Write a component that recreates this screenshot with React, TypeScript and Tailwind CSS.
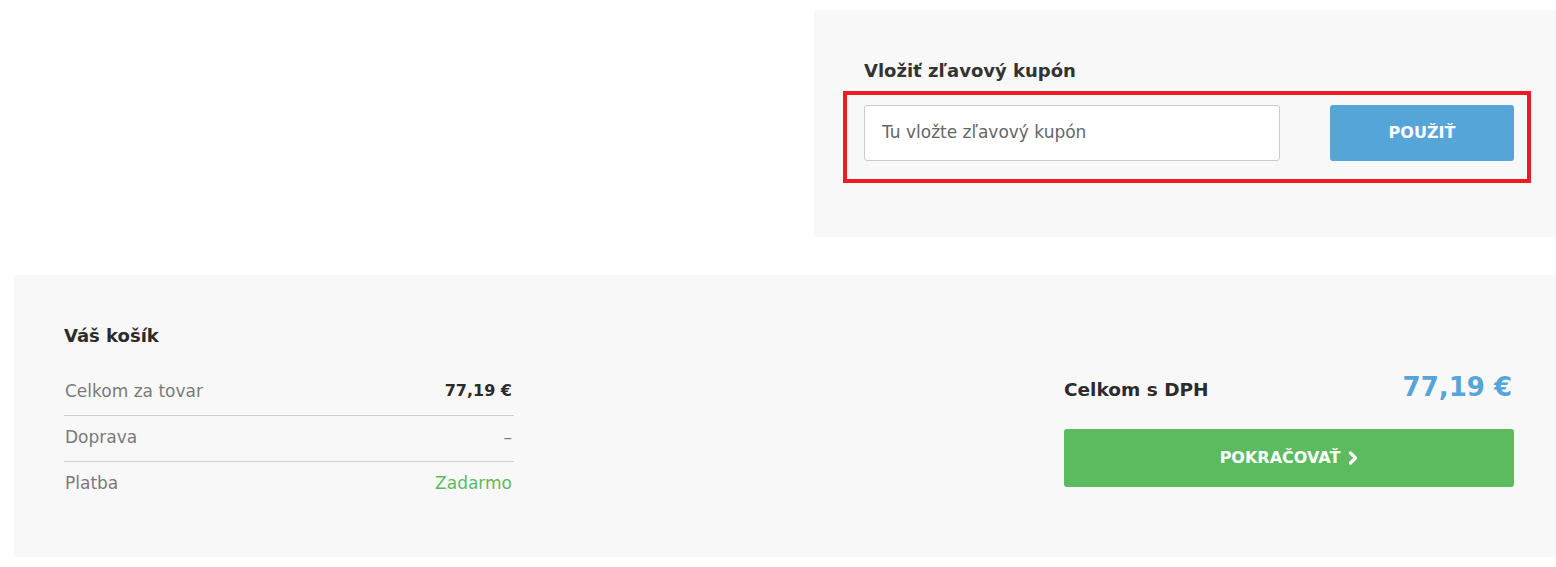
import React from "react";

function Row({ label, value, valueClass, last }: { label: string; value: string; valueClass: string; last?: boolean }) {
  return (
    <div className={`flex items-center justify-between pb-[12px] pt-[9px] leading-[24px] ${last ? "" : "border-b border-[#cfcfcf]"}`}>
      <span className="pl-px text-[17px] text-[#7a7a7a]">{label}</span>
      <span className={`pr-[2px] ${valueClass}`}>{value}</span>
    </div>
  );
}

export default function App() {
  return (
    <div className="min-h-[567px] bg-white pl-[14px] pt-[10px] text-[#2e2e2e]" style={{ fontFamily: '"DejaVu Sans", sans-serif' }}>
      <div className="flex justify-end">
        <div className="w-[742px] bg-[#f8f8f8] pb-[54px] pl-[29px] pr-[25px] pt-[50px]">
          <h2 className="pl-[21px] text-[18px] font-semibold leading-[22px] text-[#333]">Vložiť zľavový kupón</h2>
          <div className="mt-[9px] flex items-center justify-between border-4 border-[#ed1c24] pb-[18px] pl-[17px] pr-[13px] pt-[10px]">
            <div className="flex h-[56px] w-[416px] items-center rounded-[3px] border border-[#cccccc] bg-white pl-[17px] text-[17px] text-[#666]">
              Tu vložte zľavový kupón
            </div>
            <button className="h-[56px] w-[184px] rounded-[3px] bg-[#56a5d9] text-[16px] font-bold text-white">POUŽIŤ</button>
          </div>
        </div>
      </div>

      <div className="mt-[38px] flex justify-between bg-[#f8f8f8] pb-[50px] pl-[50px] pr-[42px] pt-[50px]">
        <div className="w-[450px]">
          <h2 className="text-[18px] font-bold leading-[22px] text-[#2b2b2b]">Váš košík</h2>
          <div className="mt-[23px]">
            <Row label="Celkom za tovar" value="77,19 €" valueClass="text-[16px] font-bold text-[#2b2b2b]" />
            <Row label="Doprava" value="–" valueClass="text-[17px] text-[#7a7a7a]" />
            <Row label="Platba" value="Zadarmo" valueClass="text-[17px] text-[#5cbb5e]" last />
          </div>
        </div>
        <div className="w-[450px] pt-[45px]">
          <div className="flex items-baseline justify-between">
            <span className="text-[18.5px] font-semibold text-[#2b2b2b]">Celkom s DPH</span>
            <span className="pr-[2px] text-[26px] font-bold leading-[34px] text-[#56a5d9]">77,19 €</span>
          </div>
          <button className="mt-[25px] flex h-[58px] w-full items-center justify-center gap-[8px] rounded-[3px] bg-[#5cbb5e] text-[16px] font-bold text-white">
            POKRAČOVAŤ
            <svg width="10" height="14" viewBox="0 0 10 14" fill="none">
              <path d="M2.5 2l5 5-5 5" stroke="white" strokeWidth="3.2" strokeLinecap="round" strokeLinejoin="round" />
            </svg>
          </button>
        </div>
      </div>
    </div>
  );
}
